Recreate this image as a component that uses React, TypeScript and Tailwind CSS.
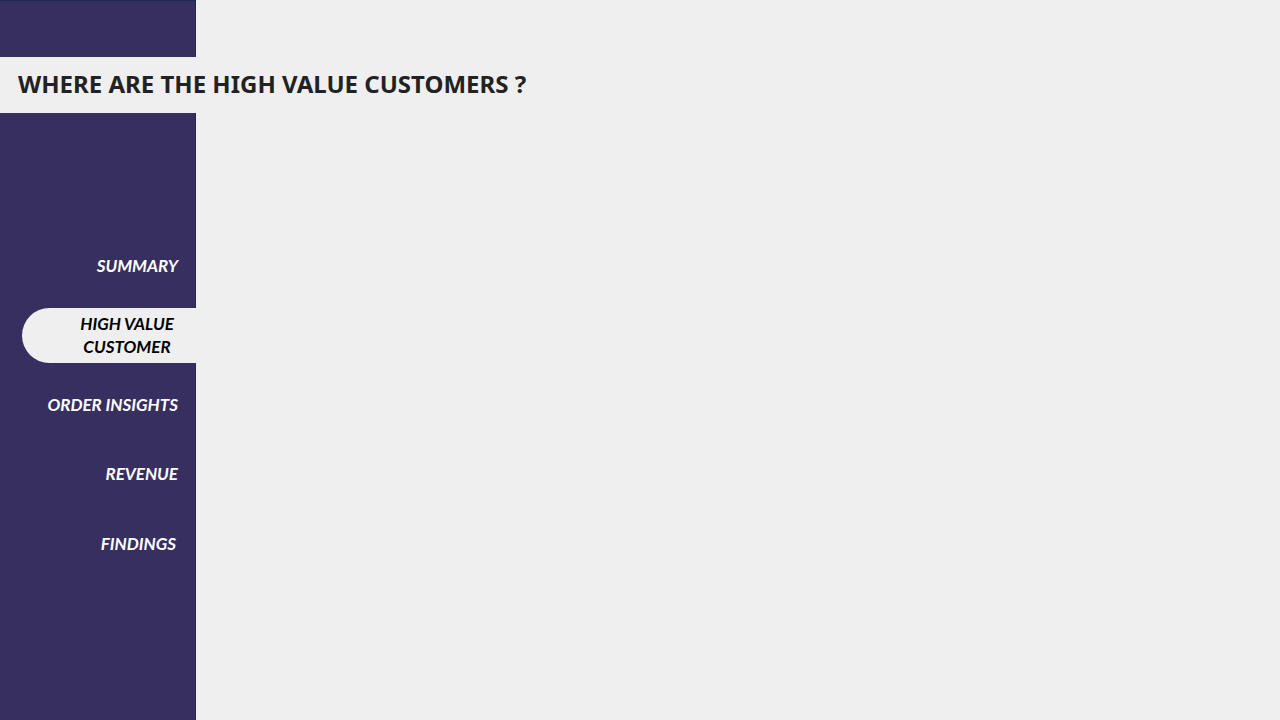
const items = [
  { label: "SUMMARY", href: "#summary", pad: "pr-[17px] pb-[2px]" },
  { label: "HIGH VALUE CUSTOMER", href: "#high-value-customer", pad: "", active: true },
  { label: "ORDER INSIGHTS", href: "#order-insights", pad: "pr-[17px] pb-[2px]" },
  { label: "REVENUE", href: "#revenue", pad: "pr-[17px] pb-[2px]" },
  { label: "FINDINGS", href: "#findings", pad: "pr-[19px]" },
];

export default function App() {
  return (
    <div className="flex min-h-screen flex-col bg-[#efefef] font-['Noto_Sans','Open_Sans',sans-serif]">
      <div className="h-[57px] w-[196px] border-t border-r border-[#1a2c50] bg-[#362f60]" />
      <header className="flex h-14 items-center pb-[2px] pl-[18px]">
        <h1 className="text-2xl font-bold text-[#222222]">WHERE ARE THE HIGH VALUE CUSTOMERS ?</h1>
      </header>
      <div className="flex w-[196px] grow flex-col border-r border-[#1a2c50] bg-[#362f60] pt-[126px]">
        <nav className="flex flex-col gap-[15px] font-[Lato,sans-serif] text-[17px] leading-[23px] font-bold italic">
          {items.map((item) =>
            item.active ? (
              <a
                key={item.label}
                href={item.href}
                aria-current="page"
                className="-mr-px ml-[22px] flex h-[55px] items-center rounded-l-full bg-[#efefef] pr-[17px] pb-[2px] pl-[53px] text-center text-black"
              >
                {item.label}
              </a>
            ) : (
              <a
                key={item.label}
                href={item.href}
                className={`flex h-[54px] items-center justify-end text-white ${item.pad}`}
              >
                {item.label}
              </a>
            ),
          )}
        </nav>
      </div>
    </div>
  );
}
